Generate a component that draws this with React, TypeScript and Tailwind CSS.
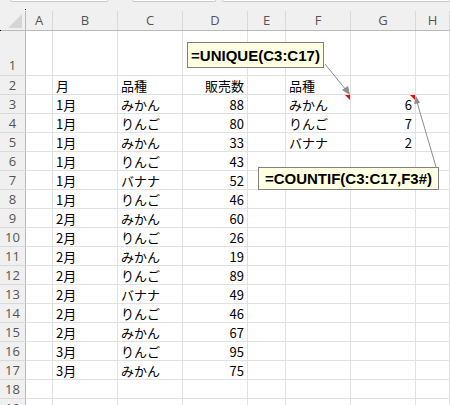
import React from "react";

const widths = [26, 27, 65, 65, 65, 38, 65, 65];
const cols = ["A", "B", "C", "D", "E", "F", "G", "H"];

type Row = { n: number; h: number; cells: (string | null)[]; right?: boolean[] };

const data: [string, string, string][] = [
  ["1月", "みかん", "88"],
  ["1月", "りんご", "80"],
  ["1月", "みかん", "33"],
  ["1月", "りんご", "43"],
  ["1月", "バナナ", "52"],
  ["1月", "りんご", "46"],
  ["2月", "みかん", "60"],
  ["2月", "りんご", "26"],
  ["2月", "みかん", "19"],
  ["2月", "りんご", "89"],
  ["2月", "バナナ", "49"],
  ["2月", "りんご", "46"],
  ["2月", "みかん", "67"],
  ["3月", "りんご", "95"],
  ["3月", "みかん", "75"],
];

const summary: Record<number, [string, string]> = {
  3: ["みかん", "6"],
  4: ["りんご", "7"],
  5: ["バナナ", "2"],
};

function buildRows(): Row[] {
  const rows: Row[] = [];
  rows.push({ n: 1, h: 45, cells: ["", "", "", "", "", "", "", ""] });
  rows.push({ n: 2, h: 19, cells: ["", "月", "品種", "販売数", "", "品種", "", ""] });
  data.forEach((d, i) => {
    const n = i + 3;
    const s = summary[n];
    rows.push({
      n,
      h: 19,
      cells: ["", d[0], d[1], d[2], "", s ? s[0] : "", s ? s[1] : "", ""],
    });
  });
  rows.push({ n: 18, h: 19, cells: ["", "", "", "", "", "", "", ""] });
  rows.push({ n: 19, h: 19, cells: ["", "", "", "", "", "", "", ""] });
  return rows;
}

const rightCols = new Set([3, 6]);

export default function App() {
  const rows = buildRows();
  return (
    <div
      className="relative w-[450px] h-[405px] overflow-hidden bg-[#f0f0f0]"
      style={{ fontFamily: '"Noto Sans CJK JP", "Noto Sans", sans-serif' }}
    >
      {/* top strip */}
      <div className="h-[11px] flex items-start">
        <div className="ml-[10px] w-[98px] h-[2px] bg-white border-b border-x border-[#c9c9c9] rounded-b-[2px]" />
        <div className="ml-[24px] w-[84px] h-[2px] bg-white border-b border-x border-[#c9c9c9] rounded-b-[2px]" />
        <div className="ml-[6px] flex-1 h-[2px] bg-white border-b border-x border-[#c9c9c9] rounded-b-[2px]" />
      </div>
      {/* header row */}
      <div className="flex h-[20px] border-b border-[#b9b9b9]">
        <div className="relative shrink-0 w-[26px] border-r border-[#b9b9b9]">
          <svg className="absolute left-0 top-0" width="25" height="19" viewBox="0 0 25 19">
            <polygon points="8,17 22,17 22,3" fill="#d6d6d6" />
          </svg>
        </div>
        {cols.map((c, i) => (
          <div
            key={c}
            className={`flex items-center justify-center text-[13px] text-[#555] border-r border-[#d9d9d9] ${
              i < 7 ? "shrink-0" : "flex-1"
            }`}
            style={i < 7 ? { width: widths[i + 1] } : undefined}
          >
            <span style={{ fontFamily: '"Open Sans", "Noto Sans", sans-serif' }}>{c}</span>
          </div>
        ))}
      </div>
      {/* body rows */}
      {rows.map((r) => (
        <div key={r.n} className="flex" style={{ height: r.h }}>
          <div
            className={`shrink-0 w-[26px] bg-[#f0f0f0] border-r border-b border-r-[#b9b9b9] border-b-[#d9d9d9] flex justify-center text-[13px] text-[#555] leading-none ${
              r.h > 19 ? "items-end pb-[3px]" : "items-center"
            }`}
          >
            <span style={{ fontFamily: '"Open Sans", "Noto Sans", sans-serif' }}>{r.n}</span>
          </div>
          {r.cells.map((v, i) => (
            <div
              key={i}
              className={`bg-white border-r border-b border-[#e1e1e1] px-[3px] flex items-center text-[13px] leading-none text-black whitespace-nowrap ${
                rightCols.has(i) ? "justify-end" : "justify-start"
              } ${i < 7 ? "shrink-0" : "flex-1"}`}
              style={i < 7 ? { width: widths[i + 1] } : undefined}
            >
              {v}
            </div>
          ))}
        </div>
      ))}

      {/* tiny markers */}
      <div className="absolute left-[25px] top-[9px] w-[1px] h-[1px] bg-black" />
      <div className="absolute left-0 top-[30px] w-[1px] h-[1px] bg-black" />

      {/* arrows & comment indicators */}
      <svg className="absolute left-0 top-0 pointer-events-none" width="450" height="405" viewBox="0 0 450 405">
        <polygon points="345,95 350,95 350,100" fill="#ff0000" />
        <polygon points="410,95 415,95 415,100" fill="#ff0000" />
        <line x1="325" y1="64" x2="346" y2="90" stroke="#8c8c8c" strokeWidth="1" />
        <polygon points="350,95 342,90 348,86" fill="#8c8c8c" />
        <line x1="436" y1="167" x2="417" y2="102" stroke="#8c8c8c" strokeWidth="1" />
        <polygon points="416,96 414,104 420,103" fill="#8c8c8c" />
      </svg>

      {/* callouts */}
      <div
        className="absolute left-[187px] top-[42px] w-[137px] h-[26px] bg-[#ffffe1] border border-[#808080] flex items-center justify-center text-[15px] font-bold text-black leading-none"
        style={{ fontFamily: '"Liberation Sans", Arial, sans-serif' }}
      >
        =UNIQUE(C3:C17)
      </div>
      <div
        className="absolute left-[258px] top-[167px] w-[181px] h-[23px] bg-[#ffffe1] border border-[#808080] flex items-center justify-center text-[15px] font-bold text-black leading-none"
        style={{ fontFamily: '"Liberation Sans", Arial, sans-serif' }}
      >
        =COUNTIF(C3:C17,F3#)
      </div>
    </div>
  );
}
